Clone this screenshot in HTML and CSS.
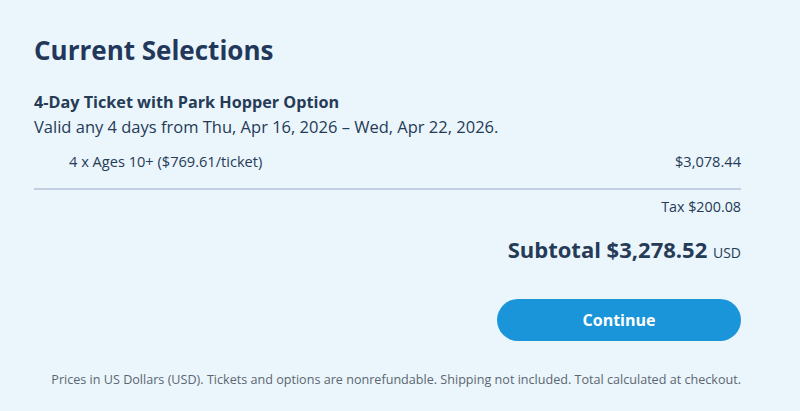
FILE: index.html
```html
<!DOCTYPE html>
<html>
<head>
<meta charset="utf-8">
<link rel="stylesheet" href="styles.css">
</head>
<body>
<main class="panel">
  <h1 class="title">Current Selections</h1>
  <section class="product">
    <h2 class="product-name">4-Day Ticket with Park Hopper Option</h2>
    <p class="product-valid">Valid any 4 days from Thu, Apr 16, 2026 – Wed, Apr 22, 2026.</p>
    <div class="line-item">
      <span>4 x Ages 10+ ($769.61/ticket)</span>
      <span>$3,078.44</span>
    </div>
  </section>
  <div class="totals">
    <div class="tax">Tax $200.08</div>
    <div class="subtotal"><strong>Subtotal $3,278.52</strong> <span class="currency">USD</span></div>
    <button class="continue">Continue</button>
  </div>
  <p class="note">Prices in US Dollars (USD). Tickets and options are nonrefundable. Shipping not included. Total calculated at checkout.</p>
</main>
</body>
</html>
```
FILE: styles.css
```css
html, body {
  margin: 0;
  padding: 0;
  background: #ebf5fc;
}
body {
  font-family: "Open Sans", Lato, sans-serif;
  color: #253b56;
}
.panel {
  width: 707px;
  padding: 34px 0 0 34px;
  display: flex;
  flex-direction: column;
}
.title {
  margin: 0;
  font-size: 26px;
  line-height: 32px;
  font-weight: 700;
  color: #22385a;
}
.product {
  margin-top: 24px;
}
.product-name {
  margin: 0;
  font-size: 16.2px;
  line-height: 24px;
  font-weight: 700;
}
.product-valid {
  margin: 1px 0 0;
  font-size: 16.5px;
  line-height: 24px;
}
.line-item {
  display: flex;
  justify-content: space-between;
  padding: 12px 0 17px 35px;
  font-size: 14.6px;
  line-height: 20px;
  border-bottom: 2px solid #c1cfe0;
}
.totals {
  display: flex;
  flex-direction: column;
  align-items: flex-end;
}
.tax {
  margin-top: 7px;
  font-size: 14.3px;
  line-height: 20px;
}
.subtotal {
  margin-top: 17px;
  font-size: 22px;
  line-height: 30px;
}
.subtotal strong {
  font-weight: 700;
}
.currency {
  font-size: 14px;
}
.continue {
  margin-top: 31px;
  width: 244px;
  height: 42px;
  border: none;
  border-radius: 21px;
  background: #1a95d9;
  color: #fff;
  font-family: inherit;
  font-size: 16px;
  font-weight: 700;
}
.note {
  margin: 30px 0 0;
  text-align: right;
  font-size: 12.6px;
  line-height: 18px;
  color: #5b6770;
  white-space: nowrap;
}
```
